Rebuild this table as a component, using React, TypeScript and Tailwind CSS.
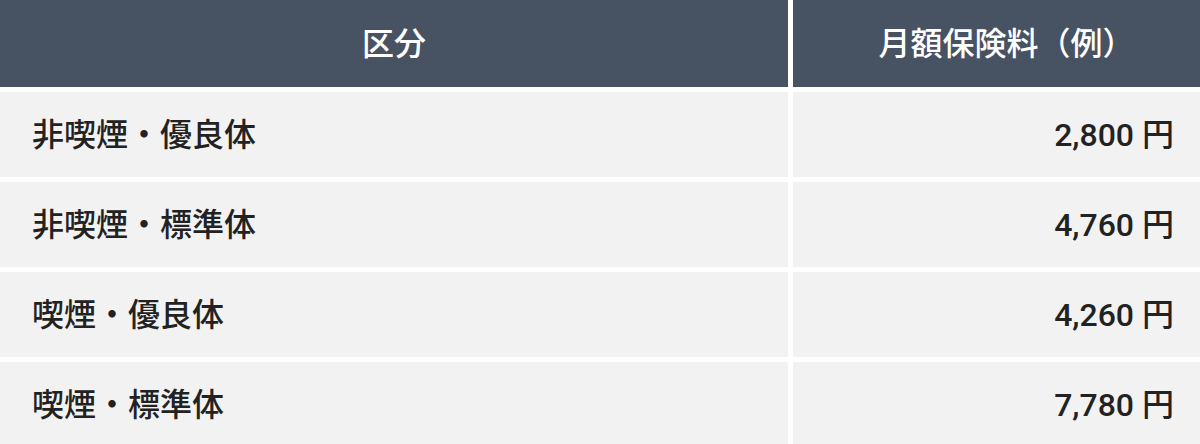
const rows = [
  { label: "非喫煙・優良体", price: "2,800 円" },
  { label: "非喫煙・標準体", price: "4,760 円" },
  { label: "喫煙・優良体", price: "4,260 円" },
  { label: "喫煙・標準体", price: "7,780 円" },
];

export default function App() {
  return (
    <div
      className="h-[444px] w-[1200px] overflow-hidden bg-white"
      style={{ fontFamily: 'Roboto, "Noto Sans CJK JP", "Noto Sans", sans-serif' }}
    >
      <div className="grid grid-cols-[788px_1fr] gap-x-[5px] gap-y-[5px]">
        <div className="flex h-[87px] items-center justify-center bg-[#475262] text-[32px] font-medium text-white">
          区分
        </div>
        <div className="flex h-[87px] items-center justify-center bg-[#475262] pl-5 text-[32px] font-medium text-white">
          月額保険料（例）
        </div>
        {rows.map((row) => (
          <>
            <div
              key={row.label}
              className="flex h-[85px] items-center bg-[#f2f2f2] pl-8 text-[32px] font-medium text-[#222]"
            >
              {row.label}
            </div>
            <div
              key={row.price}
              className="flex h-[85px] items-center justify-end bg-[#f2f2f2] pr-[26px] text-[32px] font-medium text-[#222]"
            >
              {row.price}
            </div>
          </>
        ))}
      </div>
    </div>
  );
}
